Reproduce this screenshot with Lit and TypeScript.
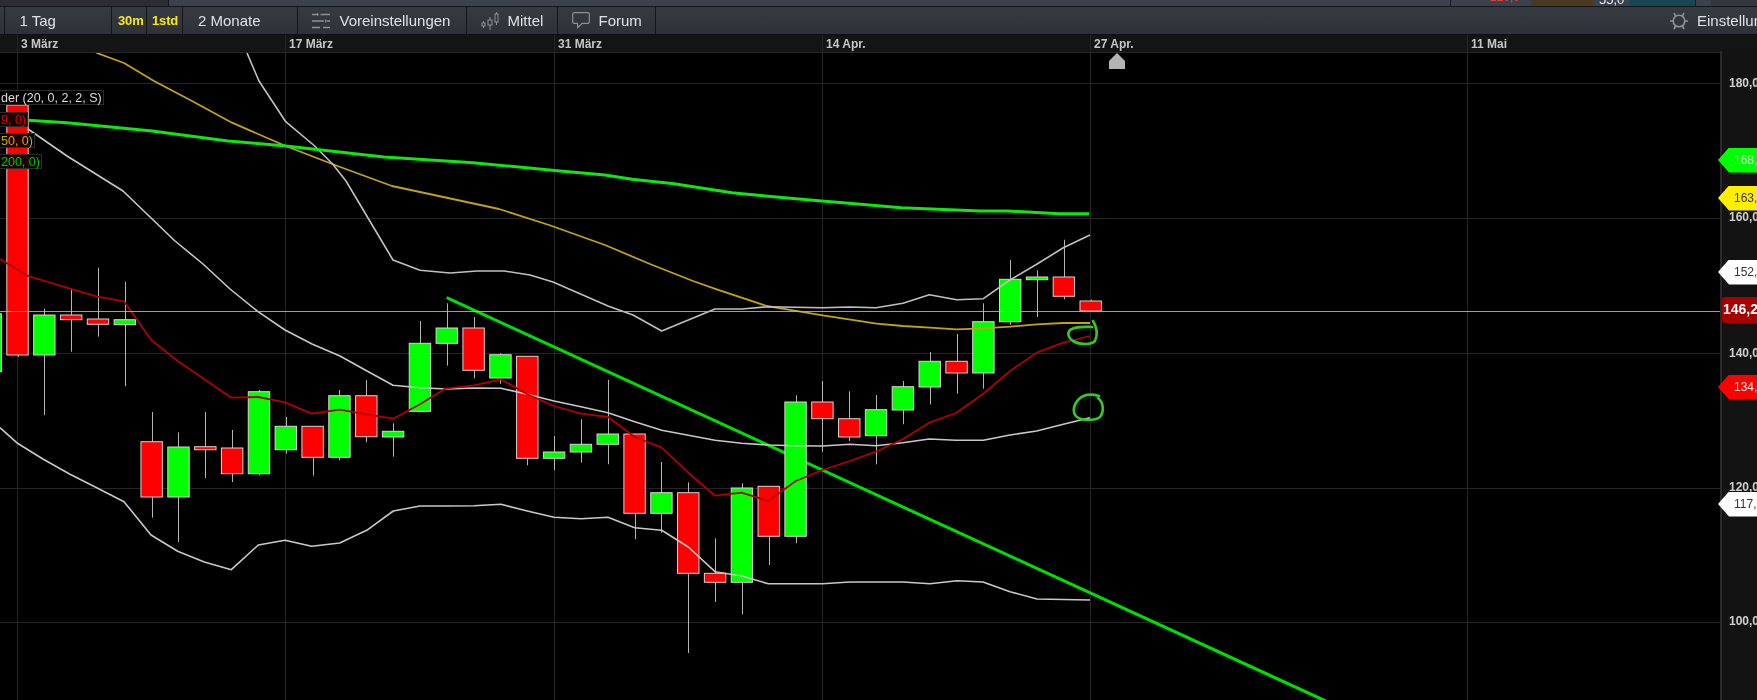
import { LitElement, html, css, svg } from "lit";
import { customElement } from "lit/decorators.js";

type Candle = [number, number, number, number, "r" | "g"]; // body top, body bottom, wick top, wick bottom
const CANDLES: Candle[] = [
  [312.7, 370.7, 312.7, 370.7, "g"],
  [104, 354, 104, 356, "r"],
  [314, 354, 307.7, 414.3, "g"],
  [314, 318.7, 287.7, 350.7, "r"],
  [318, 323.3, 266.7, 335.7, "r"],
  [318.7, 323.7, 280.7, 385.3, "g"],
  [440.7, 496, 411, 516.7, "r"],
  [446, 496, 431.3, 541, "g"],
  [445.7, 448.7, 411, 477, "r"],
  [447, 472.7, 429, 481, "r"],
  [390.7, 472.7, 389, 474.3, "g"],
  [425.3, 448.7, 416, 452.7, "g"],
  [425.3, 456.3, 425.3, 474.7, "r"],
  [394.7, 456.3, 389, 459.3, "g"],
  [394.7, 435.7, 379, 441.3, "r"],
  [430.3, 436, 422.3, 455.7, "g"],
  [342.3, 410.3, 320, 410.3, "g"],
  [327, 342.3, 302.3, 364.7, "g"],
  [327, 369.3, 316, 377.3, "r"],
  [353.7, 377, 352.3, 382.7, "g"],
  [355.3, 457.3, 355.3, 464.3, "r"],
  [451, 457.3, 435, 469.3, "g"],
  [443.3, 451, 418.3, 461.7, "g"],
  [433, 443.3, 379, 463.3, "g"],
  [433, 512.3, 433, 538.3, "r"],
  [491.7, 512.3, 461, 531.7, "g"],
  [491.7, 572.3, 481.3, 652, "r"],
  [572.3, 581.3, 537.3, 601, "r"],
  [487, 581.3, 482.3, 613.3, "g"],
  [485.3, 535.3, 485.3, 564, "r"],
  [401, 535.3, 394.3, 542.3, "g"],
  [401, 417.7, 380, 450.7, "r"],
  [417.7, 436, 390.3, 440, "r"],
  [408.7, 434.7, 394, 463.3, "g"],
  [385.7, 409, 380, 423.3, "g"],
  [360.3, 386, 351, 403.3, "g"],
  [360.3, 372, 333, 392.7, "r"],
  [320.7, 372, 302.3, 387.7, "g"],
  [278.3, 320.7, 259, 323.7, "g"],
  [276, 278.7, 269.3, 316, "g"],
  [276, 295.3, 238.7, 298.3, "r"],
  [300, 310, 298.7, 310, "r"],
];

const UPPER = "247,52 259,80 285.7,120.7 314.7,145 332.6,163 346,180 381.7,240 393,259 420,269.3 450,272 477,270 504,270 530,274 553,281 608,305 633,314 661.7,330 715,308 741.7,308 768,305.7 822,306.7 850,306 876,306.7 903,302.3 929.3,293.7 956.7,298.7 983.3,297.7 1010,279 1036.7,263.3 1063.3,246.7 1090,234";
const MIDDLE = "28,128 67,155 123,190 175,240 203,263 230,288 258,310.7 285,329 312,343 340,355 367,370 393,384.3 420,386.7 447,388 474,387 501,387.3 527.3,393.3 554,400 581,405.7 608,411.7 634.7,420.7 661.7,429.3 688.3,434.3 715,439.3 741.7,442.3 768.3,444 795.7,444.7 822.7,445 850,443.3 876,444.7 902.7,441.7 929.3,438 956,439.3 983.3,439.3 1010,434 1036.7,430 1063.3,423.3 1090,416.7";
const LOWER = "0,426.7 16.7,441.7 43.3,458.3 70,473.3 96.7,486.7 124,500.7 151,534 177.7,550.3 204.3,561 231.3,568.7 258.3,544 285,539.3 311.7,545.3 339.7,542 366.7,529.3 393.3,510 420,505 447,505 474,504.7 501,503.3 527.3,510 554,516.3 581,517.7 608,516.3 634.7,526.7 661.7,529.3 688.3,546 715,570.7 741.7,575 768.3,582.7 795.7,582.7 822.3,582.7 850,581 903,581 930,582.7 957,579.7 983,581 1010,590.7 1037,598 1090,599";
const YELLOW = "96,51.7 124,62 154,80 192,100 232,121.7 285.7,145 334.8,164 392,185 448,197 499,208 549,224 605,244 650,263 693,280 716.7,288.3 766.7,305 793,309.3 822.7,314.3 876.7,322.7 903,325 930,326.7 956.7,328.3 983,327.3 1010,325.7 1036.7,323.3 1063,322 1090,322";
const GREEN = "28,119.3 67,121.7 152,130 228,140 285.7,145 384,156 473,161.7 560,170 605,174 632,178.3 674,182.7 732,191.7 773.5,195.7 821.7,200 849,202.3 901,206.7 980,210 1007.7,210 1059,212.7 1089,212.7";
const RED = "0,258 28.3,275 70,287.7 97.3,295.7 124,300.3 151,338.7 177.7,360 204.3,378.3 231.3,396.7 258.3,396 285,401.3 311.7,412.7 339.7,408.7 366.7,413.3 393.3,417.7 420,403.3 445,387.7 474,384.3 501,378.3 527.3,393.3 554,405 581,412.7 608,416 634.7,436 661.7,446.7 688.3,471.7 715,494.7 741.7,491.7 768.3,500 795.7,480 822.5,469 850,460 876,450.7 902.7,438.3 929.3,421.7 956,412 983.3,392.7 1010,370 1036.7,351.7 1063.3,341.7 1090,335";
const SCRIBBLE_A = "M1093 320 C1097 326 1098 334 1095 340 C1091 344 1080 344 1073 340 C1067 336 1067 330 1072 328 C1078 325 1086 326 1092 326";
const SCRIBBLE_B = "M1099 395 C1092 393 1084 393 1079 398 C1073 404 1072 412 1077 416 C1083 420 1094 420 1100 416 C1104 411 1104 402 1098 397";

const GRID_X = [17, 285, 554, 822.5, 1090.5, 1467];
const GRID_Y = [82.5, 217.5, 352.5, 487.5, 621.5];
const DATES: [string, number][] = [
  ["3 März", 17], ["17 März", 285], ["31 März", 554], ["14 Apr.", 822.5], ["27 Apr.", 1090.5], ["11 Mai", 1467],
];
const AXIS: [string, number][] = [["180,0", 82], ["160,0", 216], ["140,0", 352], ["120,0", 486], ["100,0", 620]];
const TAGS: [string, number, string][] = [
  ["168,5", 159, "t-green"], ["163,5", 197, "t-yellow"], ["152,5", 271, "t-white"], ["134,5", 386, "t-red"], ["117,5", 503, "t-white"],
];
const LEGEND: [string, number, string][] = [
  ["der (20, 0, 2, 2, S)", 89, "l-white"], ["9, 0)", 111, "l-red"], ["50, 0)", 132, "l-yellow"], ["200, 0)", 153, "l-green"],
];
const PLOT_TOP = 52;

@customElement("app-root")
export class AppRoot extends LitElement {
  static styles = css`
    :host { display: block; width: 100%; height: 700px; overflow: hidden; background: #000; font-family: "Liberation Sans", Arial, sans-serif; filter: blur(0.35px); }
    .page { display: flex; flex-direction: column; height: 700px; width: 1757px; }
    .strip { height: 6px; flex: none; display: flex; background: #3c424d; border-bottom: 1px solid #14161a; overflow: hidden; }
    .s-dark { width: 169px; background: #2a2d33; border-right: 1px solid #14161a; box-sizing: border-box; }
    .s-fill { width: 1281px; }
    .s-red { width: 81px; border-left: 1px solid #1c1e22; box-sizing: border-box; color: #e04040; font-size: 12px; line-height: 1; padding-left: 39px; margin-top: -9px; }
    .s-brown { width: 62px; background: #4a3a22; }
    .s-val { width: 37px; color: #eee; font-size: 13px; line-height: 1; padding-left: 6px; box-sizing: border-box; margin-top: -7px; height: 14px; }
    .s-teal { width: 65px; background: #1a4650; }
    .s-end { width: 15px; border-left: 1px solid #1c1e22; }
    .s-rest { flex: 1; background: #33373e; }
    .toolbar { height: 27px; flex: none; display: flex; align-items: stretch; background: linear-gradient(#363b42, #2e3238); border-bottom: 1px solid #0e0f11; box-sizing: content-box; color: #dfe1e3; font-size: 15px; }
    .cell { display: flex; align-items: center; box-sizing: border-box; border-right: 1px solid #14161a; white-space: nowrap; }
    .c0 { width: 5px; }
    .c1 { width: 107px; padding-left: 14.5px; }
    .c2 { width: 35px; padding-left: 6px; }
    .c3 { width: 36px; padding-left: 5px; }
    .c4 { width: 115px; padding-left: 15px; }
    .c5 { width: 168.5px; padding-left: 14px; gap: 9.5px; }
    .c6 { width: 91px; padding-left: 14px; gap: 9px; }
    .c7 { width: 98px; padding-left: 14px; gap: 9px; }
    .fill { flex: 1; }
    .settings { width: 87px; flex: none; display: flex; align-items: center; gap: 9px; padding-left: 0; overflow: hidden; white-space: nowrap; }
    .quick { color: #f4ea1c; font-weight: 700; font-size: 13px; letter-spacing: -0.15px; }
    svg.ico { flex: none; display: block; }
    .dates { height: 17px; flex: none; position: relative; background: #141414; border-bottom: 1px solid #262626; }
    .date { position: absolute; top: 0; height: 17px; line-height: 18px; padding-left: 3px; border-left: 1px solid #252525; color: #c6c6c6; font-size: 12px; font-weight: 700; white-space: nowrap; }
    .body { flex: 1; display: flex; min-height: 0; }
    .plot { width: 1720px; flex: none; position: relative; overflow: hidden; background: #000; }
    .plot svg { display: block; width: 1720px; height: 648px; }
    .legend { position: absolute; left: 0; height: 15px; line-height: 14px; box-sizing: border-box; padding: 0 1px 0 1px; font-size: 12.5px; background: rgba(0,0,0,0.88); border: 1px solid #2c2c2c; border-left: none; white-space: nowrap; }
    .l-white { color: #dcdcdc; }
    .l-red { color: #d80000; }
    .l-yellow { color: #c8aa00; }
    .l-green { color: #00c800; }
    .axis { flex: 1; position: relative; background: #131313; border-left: 2px solid #2a2a2a; margin-top: -2px; }
    .tick { position: absolute; left: 7px; color: #cfcfcf; font-size: 12px; font-weight: 700; line-height: 14px; white-space: nowrap; }
    .tag { position: absolute; left: -4px; width: 60px; height: 25px; line-height: 25px; padding-left: 16px; box-sizing: border-box; font-size: 12px; white-space: nowrap; overflow: hidden; clip-path: polygon(0 50%, 11px 0, 100% 0, 100% 100%, 11px 100%); }
    .t-green { background: #00ff00; color: #c8ffc8; }
    .t-yellow { background: #ffee00; color: #333; }
    .t-white { background: #fff; color: #333; }
    .t-red { background: #ff0000; color: #ffe4e4; }
    .last { position: absolute; left: 0; width: 40px; height: 26px; line-height: 25px; padding-left: 1px; box-sizing: border-box; border-radius: 3px 0 0 3px; background: #a80000; color: #fff; font-size: 14px; font-weight: 700; white-space: nowrap; overflow: hidden; }
  `;

  private icoSliders() {
    return html`<svg class="ico" width="18" height="18" viewBox="0 0 18 18" fill="none" stroke="#8c9096" stroke-width="1.6">
      <path d="M0 2.5h5M8.5 2.5H18M0 9h12M15 9h3M0 15.5h8M11 15.5h7"/>
      <path d="M13 7l2 2-2 2zM5 .8l2 1.7-2 1.7z" fill="#8c9096" stroke="none"/>
    </svg>`;
  }
  private icoCandles() {
    return html`<svg class="ico" width="18" height="19" viewBox="0 0 18 19" fill="none" stroke="#8c9096" stroke-width="1">
      <path d="M2.5 10v2M2.5 15v2M9 6v3M9 14v5M15.5 1v2M15.5 11v3"/>
      <rect x="1" y="12" width="3" height="3"/><rect x="7" y="9" width="4" height="5"/><rect x="14" y="3" width="3" height="8"/>
    </svg>`;
  }
  private icoBubble() {
    return html`<svg class="ico" width="18" height="17" viewBox="0 0 18 17" fill="none" stroke="#8c9096" stroke-width="1.2">
      <path d="M2 .7h14a1.3 1.3 0 0 1 1.3 1.3v8a1.3 1.3 0 0 1-1.3 1.3H10l-4.2 4.4-.4-4.4H2A1.3 1.3 0 0 1 .7 10V2A1.3 1.3 0 0 1 2 .7z"/>
    </svg>`;
  }
  private icoGear() {
    return html`<svg class="ico" width="18" height="18" viewBox="-9 -9 18 18" fill="none" stroke="#8f9296" stroke-width="1.6">
      <circle r="5.8"/>
      <path d="M-6 0h-3M6 0h3M-3.4-5l-1.6-3M3.4-5l1.6-3M-3.4 5l-1.6 3M3.4 5l1.6 3"/>
    </svg>`;
  }

  private candle(c: Candle, i: number) {
    const cx = 17.5 + (i - 1) * 26.83;
    const wx = Math.round(cx) + 0.5;
    const fill = c[4] === "r" ? "#ff0000" : "#00ff00";
    return svg`
      <line x1=${wx} x2=${wx} y1=${c[2]} y2=${c[3]} stroke="#b4b4b4" stroke-width="1"></line>
      <rect x=${cx - 10.7} y=${c[0]} width="21.4" height=${c[1] - c[0]} fill=${fill} stroke="#d9d2d2" stroke-width="1"></rect>`;
  }

  render() {
    return html`<div class="page">
      <div class="strip">
        <div class="s-dark"></div>
        <div class="s-fill"></div>
        <div class="s-red">220,0</div>
        <div class="s-brown"></div>
        <div class="s-val">55,0</div>
        <div class="s-teal"></div>
        <div class="s-end"></div>
        <div class="s-rest"></div>
      </div>
      <div class="toolbar">
        <div class="cell c0"></div>
        <div class="cell c1">1 Tag</div>
        <div class="cell c2 quick">30m</div>
        <div class="cell c3 quick">1std</div>
        <div class="cell c4">2 Monate</div>
        <div class="cell c5">${this.icoSliders()}<span>Voreinstellungen</span></div>
        <div class="cell c6">${this.icoCandles()}<span>Mittel</span></div>
        <div class="cell c7">${this.icoBubble()}<span>Forum</span></div>
        <div class="fill"></div>
        <div class="settings">${this.icoGear()}<span>Einstellungen</span></div>
      </div>
      <div class="dates">
        ${DATES.map(([t, x]) => html`<div class="date" style="left:${Math.floor(x)}px">${t}</div>`)}
      </div>
      <div class="body">
        <div class="plot">
          <svg viewBox="0 ${PLOT_TOP} 1720 648" fill="none">
            ${GRID_X.map((x) => svg`<line x1=${Math.floor(x) + 0.5} x2=${Math.floor(x) + 0.5} y1="52" y2="700" stroke="#252525"></line>`)}
            ${GRID_Y.map((y) => svg`<line x1="0" x2="1720" y1=${y} y2=${y} stroke="#252525"></line>`)}
            <line x1="446.7" y1="296.7" x2="1328" y2="701" stroke="#00e000" stroke-width="3"></line>
            ${CANDLES.map((c, i) => this.candle(c, i))}
            <polyline points=${YELLOW} stroke="#c0a414" stroke-width="1.8" stroke-linejoin="round"></polyline>
            <polyline points=${UPPER} stroke="#c0c0c0" stroke-width="1.6" stroke-linejoin="round"></polyline>
            <polyline points=${MIDDLE} stroke="#c8c8c8" stroke-width="1.6" stroke-linejoin="round"></polyline>
            <polyline points=${LOWER} stroke="#c8c8c8" stroke-width="1.6" stroke-linejoin="round"></polyline>
            <polyline points=${RED} stroke="#b00000" stroke-width="1.8" stroke-linejoin="round"></polyline>
            <polyline points=${GREEN} stroke="#10e610" stroke-width="3" stroke-linejoin="round"></polyline>
            <line x1="0" x2="1720" y1="310.5" y2="310.5" stroke="#b8b8b8" stroke-opacity="0.85" stroke-width="1.2"></line>
            <path d=${SCRIBBLE_A} stroke="#35c822" stroke-width="2.7" stroke-linecap="round"></path>
            <path d=${SCRIBBLE_B} stroke="#35c822" stroke-width="2.7" stroke-linecap="round"></path>
            <path d="M1117 52 L1125 60 V68 H1109 V60 Z" fill="#b4b4b4"></path>
          </svg>
          ${LEGEND.map(([t, y, c]) => html`<div class="legend ${c}" style="top:${y - PLOT_TOP}px">${t}</div>`)}
        </div>
        <div class="axis">
          ${AXIS.map(([t, y]) => html`<div class="tick" style="top:${y - PLOT_TOP - 5}px">${t}</div>`)}
          ${TAGS.map(([t, y, c]) => html`<div class="tag ${c}" style="top:${y - PLOT_TOP - 10.5}px">${t}</div>`)}
          <div class="last" style="top:${296 - PLOT_TOP + 2}px">146,2</div>
        </div>
      </div>
    </div>`;
  }
}
